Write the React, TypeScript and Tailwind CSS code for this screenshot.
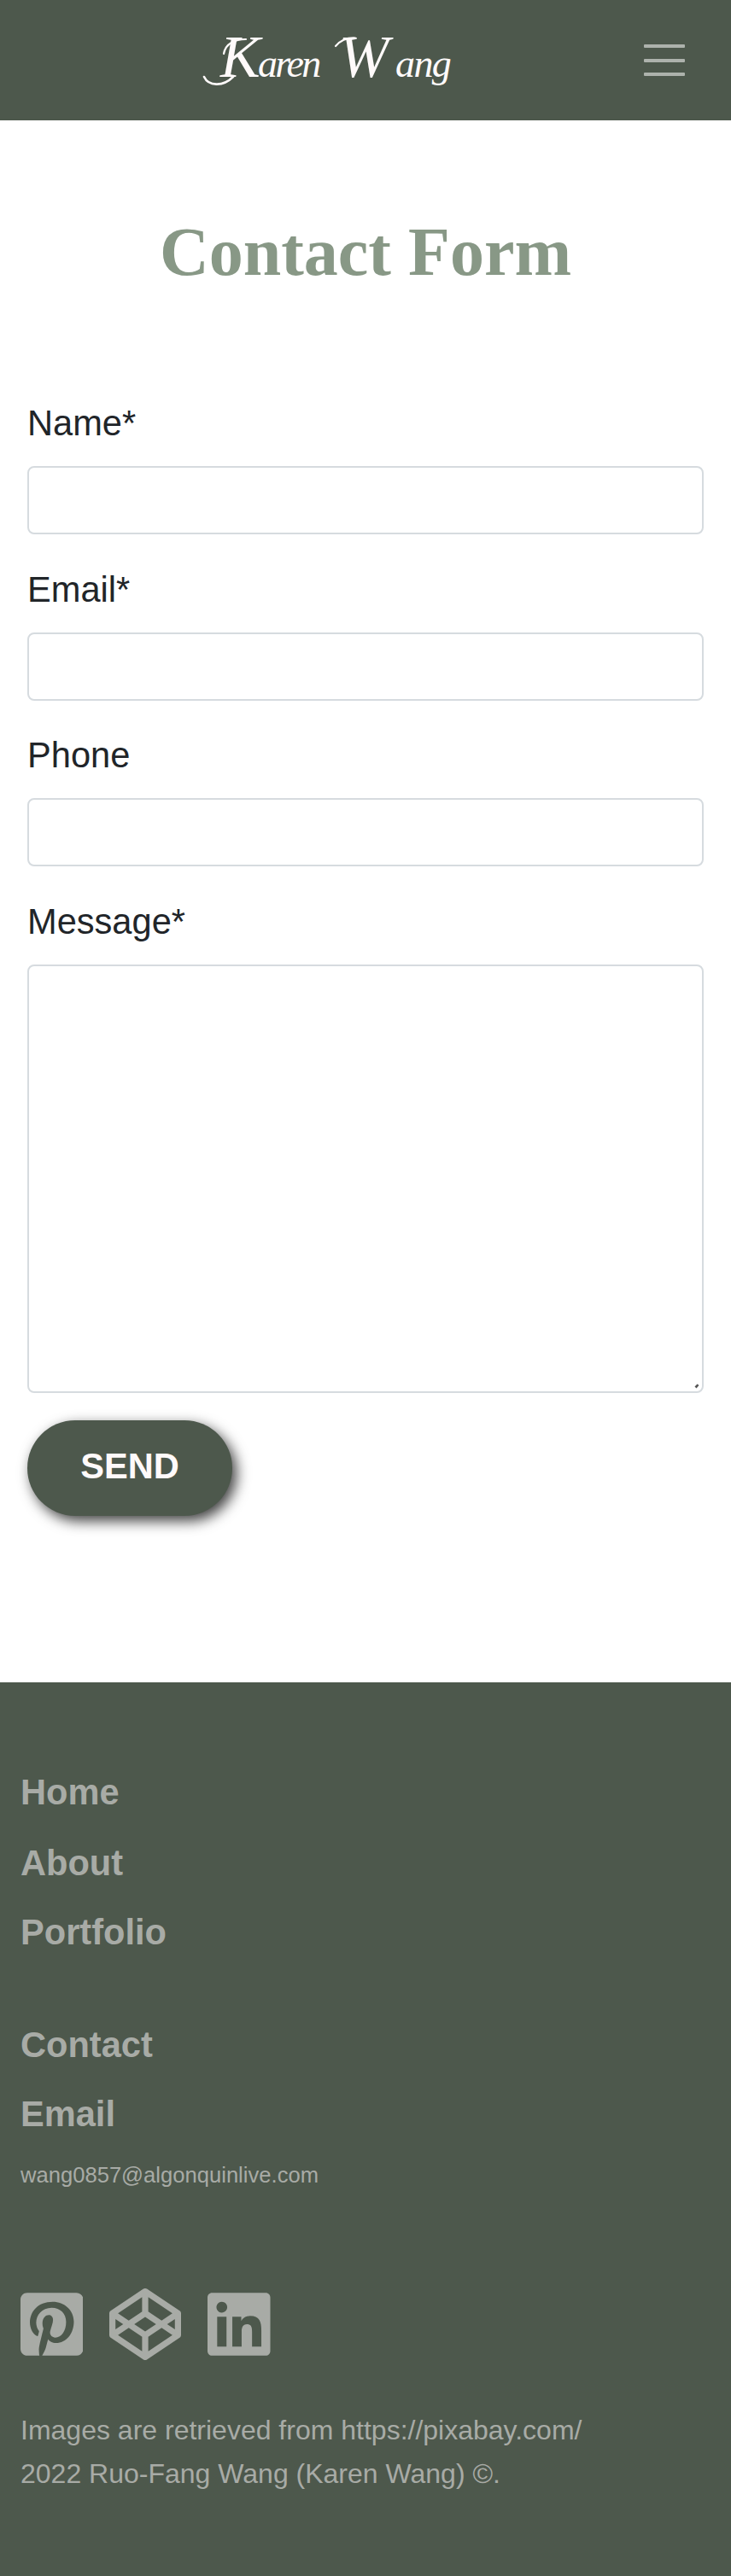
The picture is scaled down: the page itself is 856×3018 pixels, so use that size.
import { FaCodepen, FaLinkedin, FaPinterestSquare } from "react-icons/fa";

const fields = [
  { id: "name", label: "Name*" },
  { id: "email", label: "Email*" },
  { id: "phone", label: "Phone" },
];

const labelClass = "mb-[20px] block text-[41.6px] leading-[61px]";
const controlClass =
  "block w-full rounded-[8px] border-2 border-[#d6dbdf] bg-white px-5 text-[32px] outline-none";

function Header() {
  return (
    <header className="flex h-[141px] shrink-0 items-start bg-[#4d584c]">
      <svg className="ml-[230px] h-[141px] w-[310px] shrink-0" viewBox="230 0 310 141" role="img" aria-label="Karen Wang">
        <text
          y="90"
          fill="#fffafa"
          fontFamily="'Liberation Serif', serif"
          fontStyle="italic"
          xmlSpace="preserve"
        >
          <tspan x="258" fontSize="70">K</tspan>
          <tspan x="302" fontSize="46" letterSpacing="-2.8">aren</tspan>
          <tspan fontSize="30"> </tspan>
          <tspan x="397" fontSize="70">W</tspan>
          <tspan x="463" fontSize="46" letterSpacing="-1.6">ang</tspan>
        </text>
        <g fill="none" stroke="#fffafa" strokeLinecap="round">
          <path d="M239 90C244 101 261 102 273 90" strokeWidth="2.6" />
          <path d="M262 63C264 51 275 46 288 46" strokeWidth="2.2" />
          <path d="M393 54C399 47 406 44 416 44.500" strokeWidth="2.2" />
        </g>
      </svg>
      <button type="button" aria-label="Menu" className="mt-[52px] ml-[214px] flex w-12 flex-col gap-[12.5px]">
        <span className="block h-1 w-full rounded-[1px] bg-[#adb2ac]" />
        <span className="block h-1 w-full rounded-[1px] bg-[#adb2ac]" />
        <span className="block h-1 w-full rounded-[1px] bg-[#adb2ac]" />
      </button>
    </header>
  );
}

function ContactForm() {
  return (
    <form className="px-8 text-[#212529]">
      {fields.map((f) => (
        <div key={f.id} className="mb-[33.67px]">
          <label htmlFor={f.id} className={labelClass}>{f.label}</label>
          <input id={f.id} className={`${controlClass} h-[80px]`} />
        </div>
      ))}
      <label htmlFor="message" className={labelClass}>Message*</label>
      <div className="relative">
        <textarea id="message" className={`${controlClass} h-[502px] resize-none`} />
        <svg className="absolute right-[5px] bottom-[5px] h-[6px] w-[6px]" viewBox="0 0 6 6">
          <path d="M0.5 3.5L3.5 0.5L5.5 2L2.5 5.5Z" fill="#555" />
        </svg>
      </div>
      <button
        type="button"
        className="mt-8 block h-28 w-60 rounded-full bg-[#4d584c] pb-[3px] text-[41.6px] leading-[62px] font-bold text-[#fffafa] shadow-[5px_6px_16px_rgba(0,0,0,0.75)]"
      >
        SEND
      </button>
    </form>
  );
}

function Footer() {
  return (
    <footer className="h-[1047px] shrink-0 bg-[#4d584c] px-6 pt-[98px] text-[#a8aba6]">
      <nav className="text-[41.6px] leading-[62px] font-bold">
        <a className="block">Home</a>
        <a className="mt-[20.5px] block">About</a>
        <a className="mt-[19px] block">Portfolio</a>
        <a className="mt-[70px] block">Contact</a>
        <h5 className="mt-[19px]">Email</h5>
      </nav>
      <p className="mt-[21px] text-[25.6px] leading-[38px]">wang0857@algonquinlive.com</p>
      <div className="mt-[114px] -ml-[0.5px] flex h-[84px] items-center gap-[31px]">
        <FaPinterestSquare className="h-[84px] w-[73.5px]" />
        <FaCodepen className="h-[84px] w-[84px]" />
        <FaLinkedin className="h-[84px] w-[73.5px]" />
      </div>
      <p className="mt-[57px] text-[32px] leading-[51px]">
        Images are retrieved from https://pixabay.com/
        <br />
        2022 Ruo-Fang Wang (Karen Wang) ©.
      </p>
    </footer>
  );
}

export default function App() {
  return (
    <div className="flex h-[3018px] w-[856px] flex-col overflow-hidden bg-white font-['Liberation_Sans',Arial,sans-serif]">
      <Header />
      <main className="h-[1830px] shrink-0">
        <h1 className="pt-[106px] text-center font-['Liberation_Serif',serif] text-[80px] leading-[96px] font-bold text-[#889886]">
          Contact Form
        </h1>
        <div className="pt-[122px]">
          <ContactForm />
        </div>
      </main>
      <Footer />
    </div>
  );
}
